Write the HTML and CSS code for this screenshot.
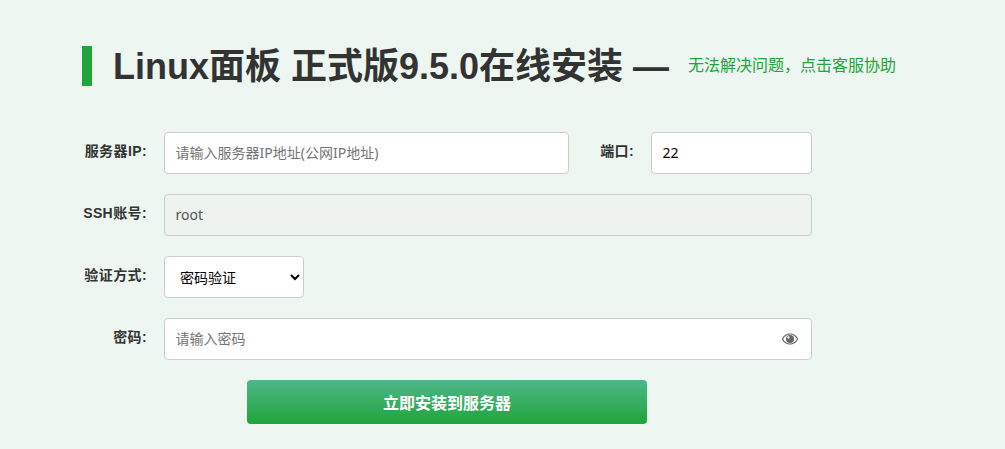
FILE: index.html
```html
<!DOCTYPE html>
<html lang="en">
<head>
    <meta charset="UTF-8">
    <meta name="viewport" content="width=device-width, initial-scale=1.0">
    <title>Linux面板 在线安装</title>
    <link rel="stylesheet" href="styles.css">
</head>
<body>
    <div class="container">
        <div class="title-row">
            <h1>Linux面板 正式版9.5.0在线安装 —</h1>
            <a class="help-link" href="#">无法解决问题，点击客服协助</a>
        </div>

        <form class="install-form">
            <div class="form-row">
                <label for="serverIp">服务器IP:</label>
                <input type="text" id="serverIp" class="input input-ip" placeholder="请输入服务器IP地址(公网IP地址)">
                <label for="port">端口:</label>
                <input type="text" id="port" class="input input-port" value="22">
            </div>
            <div class="form-row">
                <label for="account">SSH账号:</label>
                <input type="text" id="account" class="input input-full" value="root" disabled>
            </div>
            <div class="form-row">
                <label for="authType">验证方式:</label>
                <select id="authType" class="input input-select">
                    <option>密码验证</option>
                    <option>私钥验证</option>
                </select>
            </div>
            <div class="form-row">
                <label for="password">密码:</label>
                <div class="password-box">
                    <input type="password" id="password" class="input input-full" placeholder="请输入密码">
                    <svg class="eye-icon" viewBox="0 0 16 12" width="16" height="12" aria-hidden="true">
                        <path d="M0.4 6C2.2 2.6 4.9 1 8 1s5.8 1.6 7.6 5c-1.8 3.4-4.5 5-7.6 5S2.2 9.4 0.4 6z" fill="none" stroke="#666" stroke-width="1.2"/>
                        <circle cx="8" cy="6" r="4" fill="#666"/>
                        <circle cx="6.4" cy="4.4" r="1.3" fill="#ddd"/>
                    </svg>
                </div>
            </div>
            <button type="button" class="submit-btn">立即安装到服务器</button>
        </form>
    </div>
</body>
</html>
```

FILE: styles.css
```css
:root {
    --green: #20a53a;
    --text: #333;
    --border: #ccc;
}

* {
    margin: 0;
    padding: 0;
    box-sizing: border-box;
    font-family: "Liberation Sans", "Noto Sans CJK SC", sans-serif;
}

body {
    background-color: #edf6f0;
    color: var(--text);
    height: 449px;
    overflow: hidden;
}

.container {
    padding: 46px 0 0 82px;
}

.title-row {
    display: flex;
    align-items: center;
    height: 40px;
    margin-bottom: 46px;
    border-left: 10px solid var(--green);
    padding-left: 21px;
}

h1 {
    margin-bottom: 6px;
    font-size: 36px;
    font-weight: 700;
    color: var(--text);
    white-space: nowrap;
}

.help-link {
    margin: 0 0 4px 19px;
    font-size: 16px;
    color: var(--green);
    text-decoration: none;
}

.form-row {
    display: flex;
    align-items: flex-start;
    margin-bottom: 20px;
}

label {
    width: 65px;
    margin-right: 17px;
    text-align: right;
    font-size: 14px;
    font-weight: 700;
    line-height: 38px;
    letter-spacing: 0.4px;
    white-space: nowrap;
}

.input {
    display: block;
    height: 42px;
    padding: 0 10.5px 1px;
    border: 1px solid var(--border);
    border-radius: 4px;
    background-color: #fff;
    font-family: "Noto Sans", "Noto Sans CJK SC", sans-serif;
    font-size: 14px;
    color: #000;
    outline: none;
}

.input::placeholder {
    color: #757575;
}

.input:disabled {
    background-color: #eef3ef;
    color: #555;
}

.input-ip {
    width: 405px;
}

.input-port {
    width: 161px;
}

.input-full {
    width: 648px;
}

.input-select {
    width: 140px;
    padding: 0 11px;
}

.password-box {
    position: relative;
    width: 648px;
}

.eye-icon {
    position: absolute;
    top: 15px;
    right: 14px;
}

.submit-btn {
    display: block;
    width: 400px;
    height: 44px;
    margin-left: 165px;
    border: none;
    border-radius: 4px;
    background: linear-gradient(#4fb78b, #20a53a);
    color: #fff;
    font-size: 16px;
    font-weight: 700;
    cursor: pointer;
}
```
